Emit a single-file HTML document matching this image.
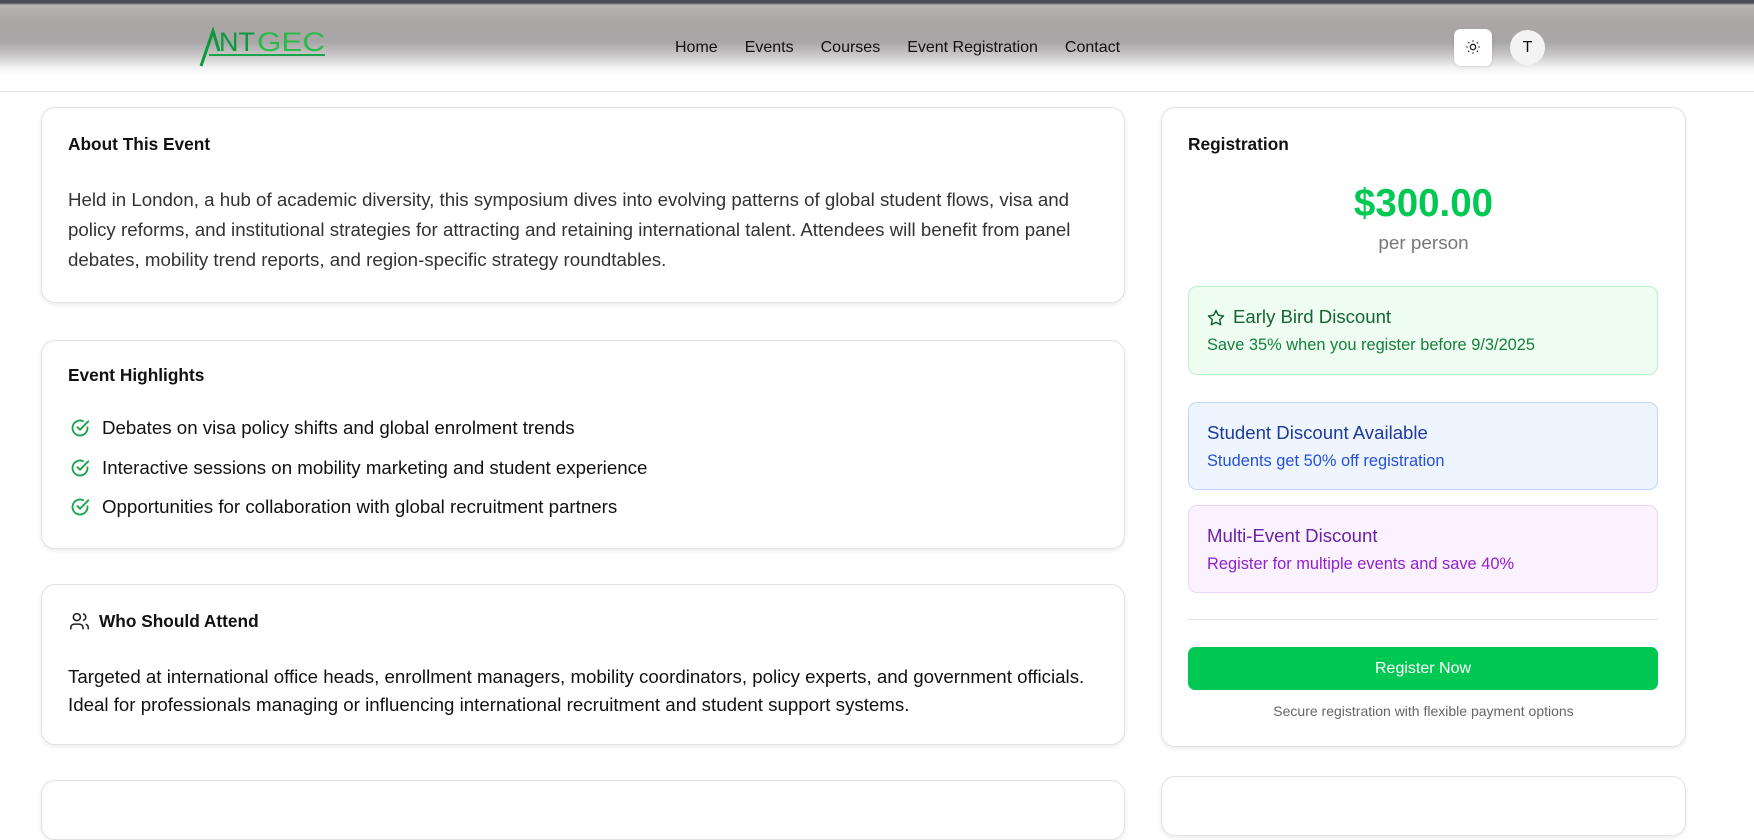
<!DOCTYPE html>
<html><head><meta charset="utf-8"><style>
*{box-sizing:border-box;margin:0;padding:0}
body{width:1754px;height:781px;overflow:hidden;background:#fff;font-family:"Liberation Sans",sans-serif;color:#111;position:relative}
.hdr{position:absolute;left:0;top:0;width:1754px;height:92px;border-bottom:1px solid #e3e3e3;
background:linear-gradient(180deg,#4a4c58 0,#4a4c58 3px,#b8b4b2 5px,#aaa6a6 22px,#a9a6a8 42px,#c9c7c7 55px,#f3f3f3 68px,#fff 76px,#fff 100%)}
.nav{position:absolute;top:39px;left:675px;font-size:16px;color:#111}
.nav span{margin-right:27px}
.card{position:absolute;background:#fff;border:1px solid #e2e2e2;border-radius:14px;box-shadow:0 2px 5px rgba(0,0,0,.08)}
h3{font-size:17.3px;font-weight:bold;position:absolute}
.p{position:absolute;font-size:18.7px;line-height:30px;color:#333}
.li{position:absolute;left:28px;font-size:18.7px;color:#111;display:flex;align-items:center}
.li svg{margin-right:12px}
.box{position:absolute;left:26px;width:470px;border-radius:9px;border:1px solid}
.box b{position:absolute;left:18px;font-size:18.6px;font-weight:normal}
.box i{position:absolute;left:18px;font-style:normal;font-size:16.4px}
</style></head><body>
<div class="hdr">
<svg style="position:absolute;left:199px;top:27px" width="128" height="42" viewBox="0 0 128 42">
<path d="M2 39 L14 4 L20 24" stroke="#0a9a3c" stroke-width="3" fill="none"/>
<text x="20" y="24" font-family="Liberation Sans Narrow,Liberation Sans,sans-serif" font-size="27" fill="#0a9a3c" textLength="36" lengthAdjust="spacingAndGlyphs">NT</text>
<text x="58" y="24" font-family="Liberation Sans Narrow,Liberation Sans,sans-serif" font-size="27" fill="#2bbb4a" textLength="68" lengthAdjust="spacingAndGlyphs">GEC</text>
<rect x="10" y="27" width="116" height="2" fill="#1aa54a"/>
</svg>
<div class="nav"><span>Home</span><span>Events</span><span>Courses</span><span>Event Registration</span><span>Contact</span></div>
<div style="position:absolute;left:1454px;top:29px;width:38px;height:37px;background:#fff;border-radius:7px;box-shadow:0 1px 3px rgba(0,0,0,.1)">
<svg style="position:absolute;left:11px;top:10px" width="16" height="16" viewBox="0 0 24 24" fill="none" stroke="#222" stroke-width="2"><circle cx="12" cy="12" r="4"/><path d="M12 2v2M12 20v2M4.9 4.9l1.4 1.4M17.7 17.7l1.4 1.4M2 12h2M20 12h2M4.9 19.1l1.4-1.4M17.7 6.3l1.4-1.4"/></svg></div>
<div style="position:absolute;left:1510px;top:30px;width:35px;height:35px;border-radius:50%;background:#f3f3f3;text-align:center;line-height:35px;font-size:16px;color:#111">T</div>
</div>

<div class="card" style="left:41px;top:107px;width:1084px;height:196px">
<h3 style="left:26px;top:26px">About This Event</h3>
<div class="p" style="left:26px;top:77px;width:1030px">Held in London, a hub of academic diversity, this symposium dives into evolving patterns of global student flows, visa and policy reforms, and institutional strategies for attracting and retaining international talent. Attendees will benefit from panel debates, mobility trend reports, and region-specific strategy roundtables.</div>
</div>

<div class="card" style="left:41px;top:340px;width:1084px;height:209px">
<h3 style="left:26px;top:24px">Event Highlights</h3>
<div class="li" style="top:76px"><svg width="20" height="20" viewBox="0 0 24 24" fill="none" stroke="#16a34a" stroke-width="2.2" stroke-linecap="round"><path d="M21 11.1V12a9 9 0 1 1-5.3-8.2"/><path d="M9 11l3 3L22 4"/></svg>Debates on visa policy shifts and global enrolment trends</div>
<div class="li" style="top:116px"><svg width="20" height="20" viewBox="0 0 24 24" fill="none" stroke="#16a34a" stroke-width="2.2" stroke-linecap="round"><path d="M21 11.1V12a9 9 0 1 1-5.3-8.2"/><path d="M9 11l3 3L22 4"/></svg>Interactive sessions on mobility marketing and student experience</div>
<div class="li" style="top:155px"><svg width="20" height="20" viewBox="0 0 24 24" fill="none" stroke="#16a34a" stroke-width="2.2" stroke-linecap="round"><path d="M21 11.1V12a9 9 0 1 1-5.3-8.2"/><path d="M9 11l3 3L22 4"/></svg>Opportunities for collaboration with global recruitment partners</div>
</div>

<div class="card" style="left:41px;top:584px;width:1084px;height:161px">
<svg style="position:absolute;left:27px;top:26px" width="21" height="21" viewBox="0 0 24 24" fill="none" stroke="#222" stroke-width="1.8"><path d="M16 21v-2a4 4 0 0 0-4-4H6a4 4 0 0 0-4 4v2"/><circle cx="9" cy="7" r="4"/><path d="M22 21v-2a4 4 0 0 0-3-3.9M16 3.1a4 4 0 0 1 0 7.8"/></svg>
<h3 style="left:57px;top:26px">Who Should Attend</h3>
<div class="p" style="left:26px;top:78px;width:1045px;line-height:28px;color:#111">Targeted at international office heads, enrollment managers, mobility coordinators, policy experts, and government officials. Ideal for professionals managing or influencing international recruitment and student support systems.</div>
</div>
<div class="card" style="left:41px;top:780px;width:1084px;height:60px"></div>

<div class="card" style="left:1161px;top:107px;width:525px;height:640px">
<h3 style="left:26px;top:26px">Registration</h3>
<div style="position:absolute;left:0;width:100%;top:74px;text-align:center;font-size:38.5px;font-weight:bold;color:#00c853">$300.00</div>
<div style="position:absolute;left:0;width:100%;top:125px;text-align:center;font-size:18.9px;color:#777">per person</div>
<div class="box" style="top:178px;height:89px;background:#effcf2;border-color:#b8f0c8">
<svg style="position:absolute;left:18px;top:22px" width="18" height="18" viewBox="0 0 24 24" fill="none" stroke="#166534" stroke-width="2" stroke-linejoin="round"><path d="M12 2l3.1 6.3 6.9 1-5 4.9 1.2 6.8L12 17.8 5.8 21l1.2-6.8-5-4.9 6.9-1z"/></svg>
<b style="left:44px;top:19px;color:#166534">Early Bird Discount</b><i style="top:49px;color:#15803d">Save 35% when you register before 9/3/2025</i></div>
<div class="box" style="top:294px;height:88px;background:#eff5ff;border-color:#bfd5fb">
<b style="top:19px;color:#1e3a9a">Student Discount Available</b><i style="top:49px;color:#2550d8">Students get 50% off registration</i></div>
<div class="box" style="top:397px;height:88px;background:#faf3ff;border-color:#ecd5fb">
<b style="top:19px;color:#6b21a8">Multi-Event Discount</b><i style="top:49px;color:#9320d0">Register for multiple events and save 40%</i></div>
<div style="position:absolute;left:26px;width:470px;top:511px;height:1px;background:#e5e5e5"></div>
<div style="position:absolute;left:26px;width:470px;top:539px;height:43px;background:#00c853;border-radius:7px;color:#fff;text-align:center;line-height:43px;font-size:16px">Register Now</div>
<div style="position:absolute;left:0;width:100%;top:595px;text-align:center;font-size:14px;color:#666">Secure registration with flexible payment options</div>
</div>
<div class="card" style="left:1161px;top:776px;width:525px;height:60px"></div>
</body></html>
